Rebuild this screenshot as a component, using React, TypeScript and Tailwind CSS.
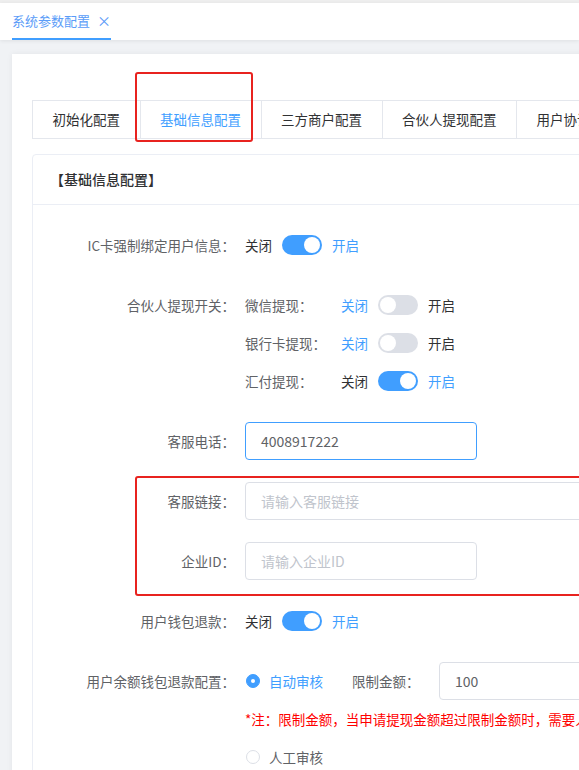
import React from 'react'

const blue = 'text-[#409eff]'
const dark = 'text-[#303133]'

function Switch({ on }: { on: boolean }) {
  return (
    <span
      className={
        'relative inline-block h-[20px] w-[40px] shrink-0 rounded-full ' +
        (on ? 'bg-[#409eff]' : 'bg-[#dcdfe6]')
      }
    >
      <span
        className={
          'absolute top-[2px] h-[16px] w-[16px] rounded-full bg-white ' +
          (on ? 'left-[22px]' : 'left-[2px]')
        }
      />
    </span>
  )
}

function SwitchGroup({ on }: { on: boolean }) {
  return (
    <div className="flex items-center gap-[10px]">
      <span className={on ? dark : blue}>关闭</span>
      <Switch on={on} />
      <span className={on ? blue : dark}>开启</span>
    </div>
  )
}

function Input({
  value,
  placeholder,
  focused,
  className = 'w-[232px]',
}: {
  value?: string
  placeholder?: string
  focused?: boolean
  className?: string
}) {
  return (
    <div
      className={
        'flex h-[38px] shrink-0 items-center rounded-[4px] border px-[15px] text-[14px] ' +
        (focused ? 'border-[#409eff] ' : 'border-[#dcdfe6] ') +
        className
      }
    >
      {value ? (
        <span className="text-[#606266]">{value}</span>
      ) : (
        <span className="text-[#c0c4cc]">{placeholder}</span>
      )}
    </div>
  )
}

function Radio({ checked, label }: { checked: boolean; label: string }) {
  return (
    <div className="flex items-center">
      <span
        className={
          'ml-[1px] flex h-[14px] w-[14px] items-center justify-center rounded-full border ' +
          (checked ? 'border-[#409eff] bg-[#409eff]' : 'border-[#dcdfe6] bg-white')
        }
      >
        {checked && <span className="h-[4px] w-[4px] rounded-full bg-white" />}
      </span>
      <span className={'ml-[9px] ' + (checked ? blue : 'text-[#606266]')}>{label}</span>
    </div>
  )
}

function FormItem({
  label,
  children,
  top,
}: {
  label: string
  children: React.ReactNode
  top?: boolean
}) {
  return (
    <div className={'mb-[22px] flex ' + (top ? 'items-start' : 'items-center')}>
      <div className="flex h-[38px] w-[212px] shrink-0 items-center justify-end pr-[10px] text-[#606266]">
        {label}
      </div>
      <div className="min-h-[38px] flex-1">{children}</div>
    </div>
  )
}

function SubRow({ label, on }: { label: string; on: boolean }) {
  return (
    <div className="flex h-[38px] items-center">
      <span className="w-[96px] text-[#606266]">{label}</span>
      <SwitchGroup on={on} />
    </div>
  )
}

const tabs = ['初始化配置', '基础信息配置', '三方商户配置', '合伙人提现配置', '用户协议配置']

export default function App() {
  return (
    <div className="relative h-[770px] w-[579px] overflow-hidden bg-[#f0f2f5] font-['Noto_Sans_CJK_SC','Noto_Sans',sans-serif] text-[13.5px]">
      <div className="h-[3px] bg-[#eeeeee]" />
      <div className="flex h-[37px] items-end bg-white px-3 shadow-[0_1px_4px_rgba(0,0,0,0.08)]">
        <div className="flex h-full items-center gap-[7px] border-b-2 border-[#409eff] text-[13px] text-[#5a9cf8]">
          <span>系统参数配置</span>
          <span className="text-[14px]">×</span>
        </div>
      </div>

      <div className="pl-3 pt-[14px]">
        <div className="w-[760px] bg-white pl-5 pt-[46px] shadow-[0_0_6px_rgba(0,0,0,0.06)]">
          <div className="flex h-[39px] border border-[#e4e7ed]">
            {tabs.map((t, i) => (
              <div
                key={t}
                className={
                  'flex h-full shrink-0 items-center px-[19.5px] ' +
                  (i > 0 ? 'border-l border-[#e4e7ed] ' : '') +
                  (i === 1 ? blue : dark)
                }
              >
                {t}
              </div>
            ))}
          </div>

          <div className="mt-[15px] rounded-[4px] border border-[#ebeef5]">
            <div className="flex h-[50px] items-center border-b border-[#ebeef5] pl-[17px] text-[14px] font-medium text-[#303133]">
              【基础信息配置】
            </div>
            <div className="pt-[21px]">
              <FormItem label="IC卡强制绑定用户信息：">
                <div className="flex h-[38px] items-center">
                  <SwitchGroup on />
                </div>
              </FormItem>
              <FormItem label="合伙人提现开关：" top>
                <SubRow label="微信提现：" on={false} />
                <SubRow label="银行卡提现：" on={false} />
                <SubRow label="汇付提现：" on />
              </FormItem>
              <FormItem label="客服电话：">
                <Input value="4008917222" focused />
              </FormItem>
              <FormItem label="客服链接：">
                <Input placeholder="请输入客服链接" className="w-[420px]" />
              </FormItem>
              <FormItem label="企业ID：">
                <Input placeholder="请输入企业ID" />
              </FormItem>
              <FormItem label="用户钱包退款：">
                <div className="flex h-[38px] items-center">
                  <SwitchGroup on />
                </div>
              </FormItem>
              <FormItem label="用户余额钱包退款配置：" top>
                <div className="flex h-[38px] items-center">
                  <Radio checked label="自动审核" />
                  <span className="ml-[29px] w-[87px] text-[#606266]">限制金额：</span>
                  <Input value="100" className="w-[232px]" />
                </div>
                <div className="flex h-[38px] items-center whitespace-nowrap text-[#f00]">
                  *注：限制金额，当申请提现金额超过限制金额时，需要人工审核
                </div>
                <div className="flex h-[38px] items-center">
                  <Radio checked={false} label="人工审核" />
                </div>
              </FormItem>
            </div>
          </div>
        </div>
      </div>

      <div className="absolute left-[135px] top-[72px] h-[70px] w-[118px] rounded-[3px] border-2 border-[#e8231f]" />
      <div className="absolute left-[135px] top-[476px] h-[120px] w-[470px] rounded-[3px] border-2 border-[#e8231f]" />
    </div>
  )
}
